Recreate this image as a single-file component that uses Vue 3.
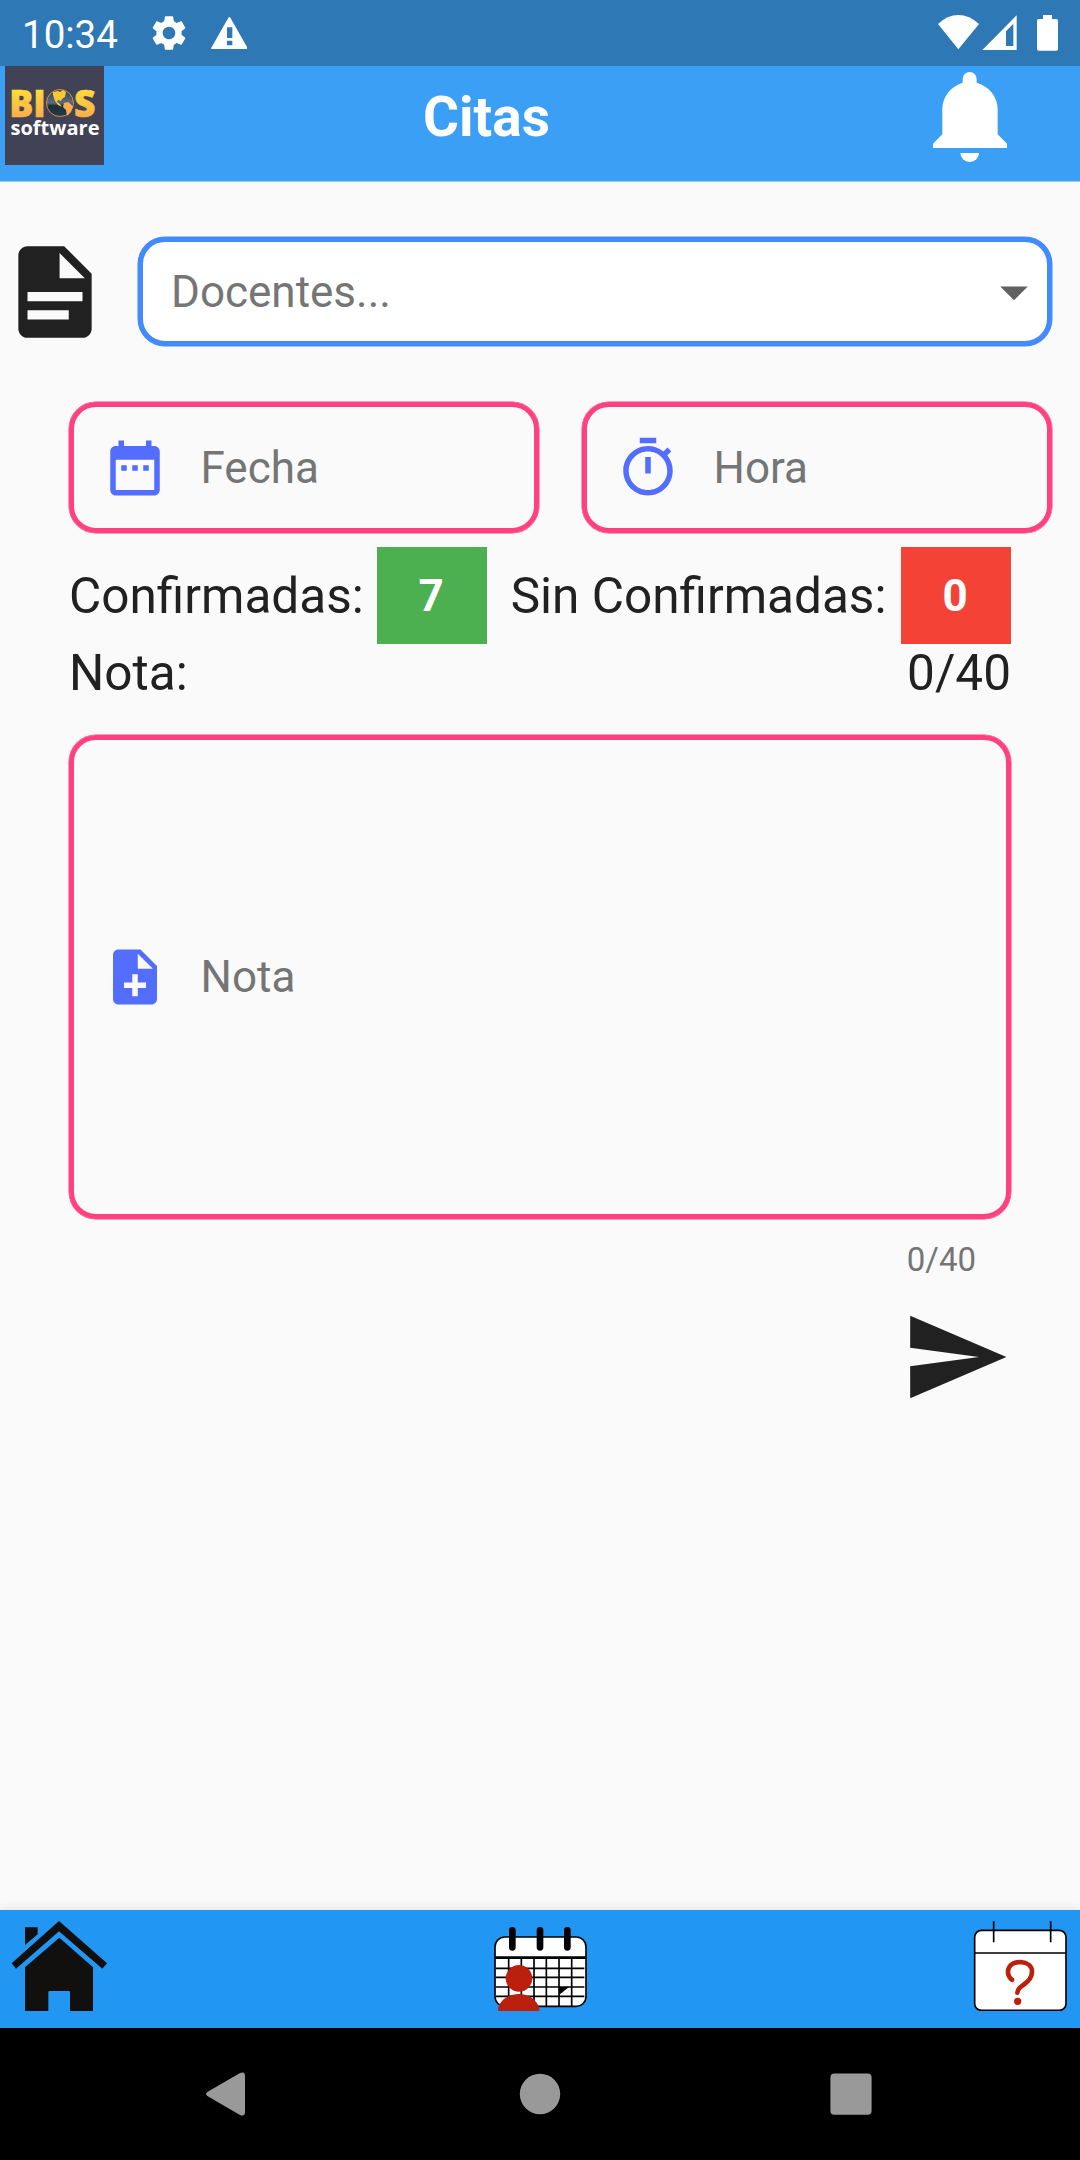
<template>
  <div class="screen">
    <div class="status-bar">
      <span class="clock">10:34</span>
      <svg class="gear" viewBox="0 0 24 24">
        <path
          d="M19.14 12.94c.04-.3.06-.61.06-.94 0-.32-.02-.64-.07-.94l2.03-1.58c.18-.14.23-.41.12-.61l-1.92-3.32c-.12-.22-.37-.29-.59-.22l-2.39.96c-.5-.38-1.03-.7-1.62-.94l-.36-2.54c-.04-.24-.24-.41-.48-.41h-3.84c-.24 0-.43.17-.47.41l-.36 2.54c-.59.24-1.13.57-1.62.94l-2.39-.96c-.22-.08-.47 0-.59.22L2.74 8.87c-.12.21-.08.47.12.61l2.03 1.58c-.05.3-.09.63-.09.94s.02.64.07.94l-2.03 1.58c-.18.14-.23.41-.12.61l1.92 3.32c.12.22.37.29.59.22l2.39-.96c.5.38 1.03.7 1.62.94l.36 2.54c.05.24.24.41.48.41h3.84c.24 0 .44-.17.47-.41l.36-2.54c.59-.24 1.13-.56 1.62-.94l2.39.96c.22.08.47 0 .59-.22l1.92-3.32c.12-.22.07-.47-.12-.61l-2.01-1.58zM12 15.6c-1.98 0-3.6-1.62-3.6-3.6s1.62-3.6 3.6-3.6 3.6 1.62 3.6 3.6-1.62 3.6-3.6 3.6z"
        />
      </svg>
      <svg class="warning" viewBox="632 50 110 98">
        <path
          d="M684 52q3-4 6 0l51 90q2 5-3 5H636q-5 0-3-5zM680 81v32h16V81zM680 121v14h16v-14z"
          fill-rule="evenodd"
        />
      </svg>
      <svg class="signals" viewBox="234 45 362 108">
        <path d="M234 72Q262 45 295 45T357 72L295 148z" />
        <path d="M470 46V150H367zM460 71L438 94V138H460z" fill-rule="evenodd" />
        <path
          d="M549 45h27v12h13q5 0 5 5v85q0 5-5 5h-53q-5 0-5-5V62q0-5 5-5h13z"
        />
      </svg>
    </div>

    <header class="app-bar">
      <svg class="logo" viewBox="0 0 99 99">
        <defs>
          <linearGradient id="gold" x1="0" y1="0" x2="0" y2="1">
            <stop offset="0.2" stop-color="#ffe037" />
            <stop offset="0.85" stop-color="#fbab4c" />
          </linearGradient>
          <linearGradient id="sea" x1="0" y1="0" x2="0" y2="1">
            <stop offset="0" stop-color="#39414d" />
            <stop offset="0.5" stop-color="#5b6b80" />
            <stop offset="0.6" stop-color="#1c2d3d" />
            <stop offset="1" stop-color="#26394a" />
          </linearGradient>
        </defs>
        <rect width="99" height="99" fill="#424257" />
        <text class="logo-big" x="4.2" y="50.5" textLength="36.5" lengthAdjust="spacingAndGlyphs">BI</text>
        <circle cx="55" cy="37" r="13.5" fill="url(#sea)" stroke="#d9954a" stroke-width="0.9" />
        <path
          d="M48 26l5-1 2 1 3-2 3 2-1 5-3 2-1 2-3-1-1 2 3 2 2 3-4-2-3-4-2-6z"
          fill="#f5c935"
        />
        <path d="M59 37l4-1 5 4-2 6-4 4-1-6-3-3z" fill="#f9ad50" />
        <text class="logo-big" x="69" y="50.5" textLength="21.5" lengthAdjust="spacingAndGlyphs">S</text>
        <text class="logo-small" x="5.5" y="69.3" textLength="89" lengthAdjust="spacingAndGlyphs">software</text>
      </svg>
      <h1>Citas</h1>
      <svg class="bell" viewBox="219 216 222 270">
        <path
          d="M308 248V237a21 21 0 0 1 42 0v11c38 11 63 42 63 80v75l28 28v13H219v-13l28-28v-75c0-38 25-69 61-80z"
        />
        <path d="M301 459h56a28 27 0 0 1-56 0z" />
      </svg>
    </header>

    <main>
      <div class="teacher-row">
        <svg class="icon-lg" viewBox="0 0 24 24">
          <path
            d="M14 2H6c-1.1 0-2 .9-2 2v16c0 1.1.9 2 2 2h12c1.1 0 2-.9 2-2V8zM13 9V3.5L18.5 9zM6 12h12v2H6zM6 16h9v2H6z"
            fill-rule="evenodd"
          />
        </svg>
        <div class="select">
          <span>Docentes...</span>
          <svg viewBox="0 0 24 24"><path d="M7 10l5 5 5-5z" /></svg>
        </div>
      </div>

      <div class="fields">
        <div v-for="field in fields" :key="field.label" class="field">
          <svg viewBox="0 0 24 24"><path :d="field.icon" /></svg>
          <span>{{ field.label }}</span>
        </div>
      </div>

      <div class="counts">
        <span>Confirmadas:</span>
        <b class="count green">{{ confirmed }}</b>
        <span class="pending">Sin Confirmadas:</span>
        <b class="count red">{{ pending }}</b>
      </div>
      <div class="note-head">
        <span>Nota:</span>
        <span>{{ note.length }}/{{ maxLength }}</span>
      </div>

      <div class="field note">
        <svg viewBox="0 0 24 24">
          <path
            d="M14 2H6c-1.1 0-1.99.9-1.99 2L4 20c0 1.1.89 2 1.99 2H18c1.1 0 2-.9 2-2V8l-6-6zm2 14h-3v3h-2v-3H8v-2h3v-3h2v3h3v2zm-3-7V3.5L18.5 9H13z"
          />
        </svg>
        <span>Nota</span>
      </div>
      <div class="counter">{{ note.length }}/{{ maxLength }}</div>
      <svg class="icon-lg send" viewBox="0 0 24 24">
        <path d="M2.01 21L23 12 2.01 3 2 10l15 2-15 2z" />
      </svg>
    </main>

    <footer class="tabs">
      <svg class="home" viewBox="33 92 290 272">
        <path d="M75 111h38v21l-38 32zM177 92L321 219l-14 16L177 123 48 235l-13-16z" />
        <path
          d="M178 142L279 231V359q0 4-4 4H210V306q0-4-4-4H149q-4 0-4 4v57H79q-4 0-4-4V231z"
        />
      </svg>
      <svg class="calendar" viewBox="72 110 278 254">
        <rect x="75" y="140" width="273" height="208" rx="29" fill="#fff" stroke="#000" stroke-width="5" />
        <path d="M76 202H347" stroke="#000" stroke-width="8" />
        <path
          d="M78 234H343M78 261H343M78 290H343M78 318H343M116 204V347M154 204V347M192 204V347M229 204V347M267 204V347M305 204V347"
          stroke="#000"
          stroke-width="5"
        />
        <path d="M267 290h30l-29 23z" />
        <path d="M127 120V171M210 120V171M292 120V171" stroke="#000" stroke-width="20" stroke-linecap="round" />
        <circle cx="147" cy="264" r="40" fill="#bb1f0e" />
        <path d="M84 363v-8c6-26 32-44 62-44s56 18 62 44v8z" fill="#bb1f0e" />
      </svg>
      <svg class="help" viewBox="520 92 282 272">
        <rect x="525" y="120" width="274" height="240" rx="20" fill="#fff" stroke="#000" stroke-width="5" />
        <path d="M525 188H799M582 93V156M753 93V156" stroke="#000" stroke-width="5" />
        <path
          d="M637 268C624 260 622 241 629 230C636 218 650 215 663 215C682 216 697 226 697 244C697 261 685 274 671 284C660 291 653 297 653 307"
          fill="none"
          stroke="#bb1f0e"
          stroke-width="14"
          stroke-linecap="round"
        />
        <circle cx="654" cy="333" r="11" fill="#bb1f0e" />
      </svg>
    </footer>

    <nav class="system-nav">
      <svg viewBox="0 0 66 66">
        <path d="M13 30L44 12q5-2 5 3V51q0 5-5 3L13 36q-6-3 0-6z" />
      </svg>
      <svg viewBox="0 0 66 66"><circle cx="33" cy="33" r="20.2" /></svg>
      <svg viewBox="0 0 66 66"><rect x="12.4" y="12.6" width="41.2" height="41.2" rx="4" /></svg>
    </nav>
  </div>
</template>

<script setup>
import { ref } from 'vue'

const confirmed = ref(7)
const pending = ref(0)
const note = ref('')
const maxLength = 40

const fields = [
  {
    label: 'Fecha',
    icon: 'M9 11H7v2h2v-2zm4 0h-2v2h2v-2zm4 0h-2v2h2v-2zm2-7h-1V2h-2v2H8V2H6v2H5c-1.11 0-1.99.9-1.99 2L3 20c0 1.1.89 2 2 2h14c1.1 0 2-.9 2-2V6c0-1.1-.9-2-2-2zm0 16H5V9h14v11z',
  },
  {
    label: 'Hora',
    icon: 'M15 1H9v2h6V1zm-4 13h2V8h-2v6zm8.03-6.61l1.42-1.42c-.43-.51-.9-.99-1.41-1.41l-1.42 1.42C16.07 4.74 14.12 4 12 4c-4.97 0-9 4.03-9 9s4.02 9 9 9 9-4.03 9-9c0-2.12-.74-4.07-1.97-5.61zM12 20c-3.87 0-7-3.13-7-7s3.13-7 7-7 7 3.13 7 7-3.13 7-7 7z',
  },
]
</script>

<style>
body {
  margin: 0;
  background: #fafafa;
}
</style>

<style scoped>
.screen {
  display: flex;
  flex-direction: column;
  width: 1080px;
  height: 2160px;
  overflow: hidden;
  background: #fafafa;
  color: #212121;
  font-family: Roboto, sans-serif;
}

svg {
  display: block;
  flex-shrink: 0;
}

.status-bar {
  display: flex;
  box-sizing: border-box;
  height: 66px;
  padding: 0 21px 0 22px;
  background: #2d78b5;
  color: #fff;
  fill: #fff;
}

.clock {
  width: 126px;
  font-size: 38.5px;
  line-height: 69px;
}

.gear {
  width: 42px;
  height: 42px;
  margin-top: 12px;
}

.warning {
  width: 36.7px;
  height: 32.7px;
  margin: 16.5px 0 0 20.5px;
}

.signals {
  width: 120.7px;
  height: 36px;
  margin: 15px 0 0 auto;
}

.app-bar {
  display: flex;
  box-sizing: border-box;
  height: 115px;
  padding: 0 73px 0 5px;
  background: #3ba0f5;
  box-shadow: 0 0.5px 0 #3ba0f5;
  color: #fff;
}

.logo {
  width: 99px;
  height: 99px;
}

.logo-big {
  font: 800 37px 'Open Sans', sans-serif;
  fill: url(#gold);
  stroke: url(#gold);
  stroke-width: 0.6px;
}

.logo-small {
  font: 700 20px 'Open Sans', sans-serif;
  fill: #fff;
}

h1 {
  flex: 1;
  margin: 0;
  padding-right: 64px;
  font-size: 55px;
  font-weight: 700;
  line-height: 102px;
  text-align: center;
}

.bell {
  width: 74px;
  height: 90px;
  margin-top: 6px;
  fill: #fff;
}

main {
  flex: 1;
  padding: 56px 28px 0 0;
}

.teacher-row {
  display: flex;
  align-items: center;
  gap: 28px;
  height: 109px;
}

.icon-lg {
  width: 110px;
  height: 110px;
  fill: #212121;
}

.select {
  display: flex;
  flex: 1;
  align-items: center;
  justify-content: space-between;
  box-sizing: border-box;
  height: 109px;
  padding-left: 28px;
  border: 5px solid #448aff;
  border-radius: 27px;
  background: #fff;
  box-shadow: 0 0 0 0.5px #448aff;
  color: #757575;
  font-size: 44px;
}

.select svg {
  width: 66px;
  height: 66px;
  fill: #616161;
}

.fields {
  display: grid;
  grid-template-columns: 1fr 1fr;
  gap: 43px;
  margin: 56px 0 14px 69px;
}

.field {
  display: flex;
  align-items: center;
  gap: 33px;
  box-sizing: border-box;
  height: 131px;
  padding-left: 27.5px;
  border: 5px solid #ff4081;
  border-radius: 27px;
  box-shadow: 0 0 0 0.5px #ff4081;
  color: #757575;
  font-size: 44px;
}

.field svg {
  width: 66px;
  height: 66px;
  fill: #536dfe;
}

.counts,
.note-head {
  display: flex;
  align-items: center;
  justify-content: space-between;
  width: 942px;
  margin-left: 69px;
  font-size: 49.5px;
  white-space: nowrap;
}

.counts {
  height: 97px;
}

.pending {
  margin: 0 1.4px 0 10.6px;
}

.count {
  box-sizing: border-box;
  width: 110px;
  height: 97px;
  padding-right: 1.5px;
  color: #fff;
  font-size: 44px;
  line-height: 98px;
  text-align: center;
}

.green {
  background: #4caf50;
}

.red {
  background: #f44336;
}

.note-head {
  height: 58px;
}

.note {
  width: 942px;
  height: 484px;
  margin: 33px 0 21px 69px;
}

.counter {
  margin: 0 76px 23px 0;
  color: #757575;
  font-size: 33px;
  line-height: 39px;
  text-align: right;
}

.send {
  margin-left: 901px;
}

.tabs {
  display: flex;
  align-items: flex-end;
  justify-content: space-between;
  box-sizing: border-box;
  height: 118px;
  padding: 0 12.7px 16.7px 11px;
  background: #2196f3;
  box-shadow: 0 -1px 10px rgba(0, 0, 0, 0.1);
}

.home {
  width: 96.7px;
  height: 90.7px;
  fill: #11100e;
}

.calendar {
  width: 92.7px;
  height: 84.7px;
}

.help {
  width: 94px;
  height: 90.7px;
}

.system-nav {
  display: flex;
  align-items: center;
  justify-content: center;
  gap: 244.7px;
  height: 132px;
  background: #000;
  fill: #999;
}

.system-nav svg {
  width: 66px;
  height: 66px;
}
</style>
